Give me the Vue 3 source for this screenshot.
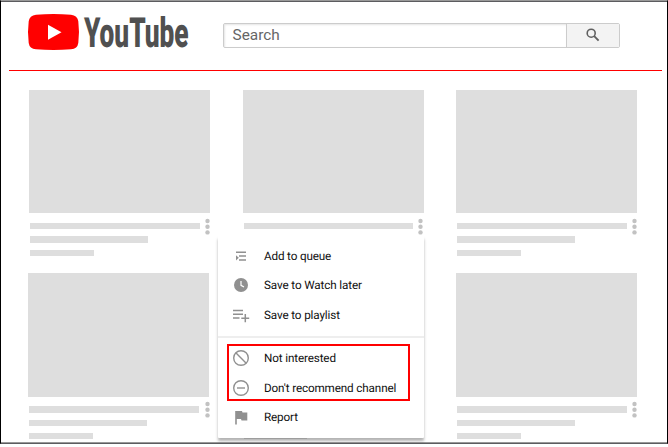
<script setup>
const cards = [0, 1, 2, 3, 4, 5]
const groups = [
  [
    { icon: 'queue', label: 'Add to queue', length: 67.3 },
    { icon: 'clock', label: 'Save to Watch later', length: 98 },
    { icon: 'playlist', label: 'Save to playlist', length: 76 },
  ],
  [
    { icon: 'block', label: 'Not interested', length: 72 },
    { icon: 'minus', label: "Don't recommend channel", length: 132.4 },
    { icon: 'flag', label: 'Report', length: 34 },
  ],
]
</script>

<template>
  <div class="page">
    <header class="header">
      <svg class="logo" width="164" height="48" viewBox="0 0 164 48">
        <path d="M8 2.700Q25.500 1.300 43 2.700Q49.500 3.300 50.300 9.300Q51.700 20 50.300 31Q49.500 36.800 43 37.300Q25.500 38.700 8 37.300Q1.500 36.800.7 31Q-.7 20 .7 9.300Q1.500 3.300 8 2.700Z" fill="#f00" />
        <path d="M20 12.800V27.700L33.500 20.300Z" fill="#fff" />
        <text class="wordmark" transform="translate(56 34.800) scale(0.650 1)" textLength="161" lengthAdjust="spacingAndGlyphs">YouTube</text>
      </svg>
      <div class="search">
        <div class="field">Search</div>
        <div class="button">
          <svg width="14" height="14" viewBox="0 0 14 14" fill="none" stroke="#606060">
            <circle cx="5.200" cy="5.200" r="4" stroke-width="1.600" />
            <path d="M8.200 8.200L12.600 12.600" stroke-width="1.900" />
          </svg>
        </div>
      </div>
    </header>
    <main class="grid">
      <article v-for="n in cards" :key="n" class="card" :class="{ lower: n > 2, first: n % 3 === 0 }">
        <div class="thumb"></div>
        <div class="meta">
          <div class="lines">
            <i class="line"></i>
            <i class="line mid"></i>
            <i class="line short"></i>
          </div>
          <svg class="dots" width="7" height="18" viewBox="0 0 7 18" fill="#c2c2c2">
            <circle cx="3.500" cy="3" r="2.200" />
            <circle cx="3.500" cy="8.700" r="2.200" />
            <circle cx="3.500" cy="14.400" r="2.200" />
          </svg>
        </div>
      </article>
    </main>
    <div class="menu">
      <div v-for="(group, g) in groups" :key="g" class="group">
        <div v-for="item in group" :key="item.icon" class="item">
          <svg class="icon" width="18" height="18" viewBox="0 0 18 18" fill="none" stroke="#909090" stroke-width="1.400">
            <template v-if="item.icon === 'queue'">
              <path d="M4 5.300H14M7 9H14M7 13H14" />
              <path d="M4 8.300L6.800 10.800L4 13.500Z" fill="#909090" stroke="none" />
            </template>
            <template v-else-if="item.icon === 'clock'">
              <circle cx="9" cy="9" r="7" fill="#909090" stroke="none" />
              <path d="M9 5V9.300L12 11" stroke="#fff" stroke-width="1.200" />
            </template>
            <path v-else-if="item.icon === 'playlist'" stroke-width="1.500" d="M1 4.500H11M1 8.300H11M1 12H7.500M13.300 8V16.200M9.300 12.200H17.200" />
            <template v-else-if="item.icon === 'block'">
              <circle cx="9" cy="9" r="7.300" />
              <path d="M3.800 3.800L14.200 14.200" />
            </template>
            <template v-else-if="item.icon === 'minus'">
              <circle cx="9" cy="9" r="7.300" />
              <path d="M5 9H13" />
            </template>
            <path v-else d="M3.200 3H10L10.500 4.500H15.300V12.500H9.500L9 11H4.800V16.500H3.200Z" fill="#909090" stroke="none" />
          </svg>
          <svg class="label" width="150" height="18">
            <text x="0" y="13.200" :textLength="item.length">{{ item.label }}</text>
          </svg>
        </div>
      </div>
      <div class="highlight"></div>
    </div>
  </div>
</template>

<style>
body {
  background: #fff;
}
</style>

<style scoped>
.page {
  position: relative;
  box-sizing: border-box;
  width: 668px;
  height: 444px;
  padding: 0 5px 0 8px;
  border: 1px solid #000;
  border-top-color: #999;
  border-bottom-color: #5c5c5f;
  box-shadow: inset 0 1px #5c5c5f, inset 0 -1px #999;
  font-family: Roboto, sans-serif;
}
.header {
  display: flex;
  box-sizing: border-box;
  height: 70px;
  padding: 11px 0 0 19px;
  border-bottom: 1px solid #ff0000;
}
.logo {
  overflow: visible;
}
.wordmark {
  font-size: 41.500px;
  font-weight: 900;
  fill: #505050;
  text-rendering: geometricPrecision;
}
.search {
  display: flex;
  box-sizing: border-box;
  width: 397px;
  height: 25px;
  margin: 11px 0 0 31px;
  border: 1px solid #ccc;
  border-radius: 2px;
}
.field {
  flex: 1;
  padding-left: 8.500px;
  box-shadow: inset 1px 1px 2px #e5e5e5;
  color: #666;
  font-size: 15.400px;
  line-height: 23px;
}
.button {
  display: flex;
  box-sizing: border-box;
  width: 53px;
  align-items: center;
  justify-content: center;
  border-left: 1px solid #ccc;
  background: #f3f3f3;
}
.button svg {
  margin: 0 1px 1px 0;
}
.grid {
  display: grid;
  grid-template-columns: repeat(3, 181px);
  grid-template-rows: 183.300px 169px;
  column-gap: 32.700px;
  padding: 19px 0 0 20px;
}
.card.lower.first {
  margin-left: -1px;
}
.thumb {
  width: 181px;
  height: 123.300px;
  background: #dedede;
}
.meta {
  display: flex;
  height: 46px;
}
.lines {
  display: flex;
  flex: none;
  width: 173.800px;
  flex-direction: column;
  gap: 7px;
  padding: 9.700px 0 0 1px;
}
.line {
  width: 169.500px;
  height: 6.400px;
  background: #dedede;
}
.mid {
  width: 118px;
}
.short {
  width: 63.500px;
}
.dots {
  flex: none;
  margin-top: 4.500px;
}
.lower .dots {
  margin-top: 4px;
}
.first.lower .dots {
  margin-left: 1px;
}
.menu {
  position: absolute;
  top: 235px;
  left: 217px;
  box-sizing: border-box;
  width: 206px;
  height: 202px;
  padding-top: 5px;
  border-radius: 1px;
  background: #fff;
  box-shadow: 0 3px 3px rgba(0, 0, 0, 0.3);
}
.group + .group {
  margin-top: 6px;
  padding-top: 6px;
  border-top: 2px solid #eee;
}
.item {
  display: flex;
  height: 29.500px;
  align-items: center;
  padding-left: 14px;
}
.label {
  margin-left: 14px;
  overflow: visible;
}
.label text {
  font-size: 11.700px;
  fill: #111;
  text-rendering: geometricPrecision;
}
.highlight {
  position: absolute;
  top: 108px;
  left: 9px;
  box-sizing: border-box;
  width: 183px;
  height: 57px;
  border: 2px solid #ff0000;
}
</style>
